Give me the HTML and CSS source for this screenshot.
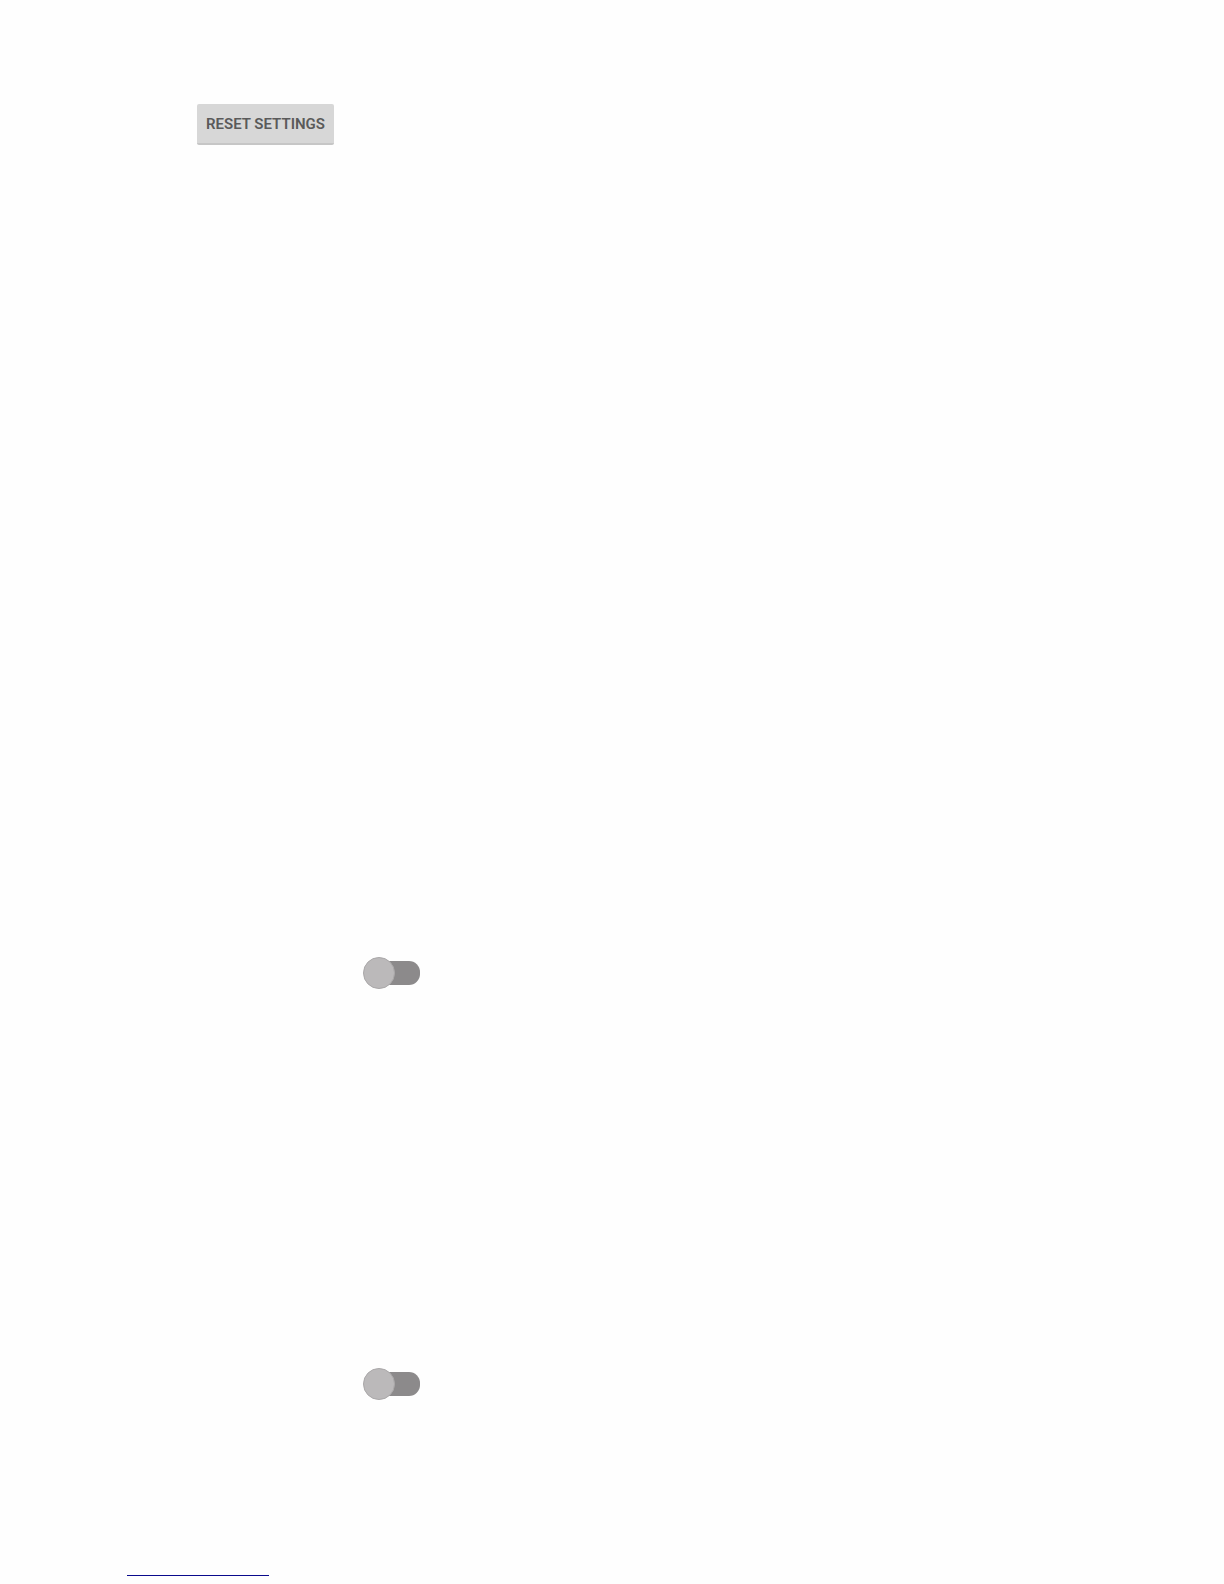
FILE: index.html
```html
<!DOCTYPE html>
<html lang="en">
<head>
<meta charset="utf-8">
<meta name="viewport" content="width=device-width, initial-scale=1">
<title>Settings</title>
<link rel="stylesheet" href="styles.css">
</head>
<body>
<main class="page">
  <section class="reset">
    <button class="reset-button" type="button">RESET SETTINGS</button>
  </section>
  <section class="option">
    <input class="switch" type="checkbox" role="switch" aria-label="First option">
  </section>
  <section class="option">
    <input class="switch" type="checkbox" role="switch" aria-label="Second option">
  </section>
  <hr class="rule">
</main>
</body>
</html>
```
FILE: styles.css
```css
body {
  margin: 0;
  background: #fefefe;
  font-family: Roboto, "Liberation Sans", sans-serif;
}

.page {
  display: flex;
  flex-direction: column;
  padding: 104px 127px 8px;
}

.reset {
  display: flex;
  padding: 0 0 812px 70px;
}

.reset-button {
  height: 41px;
  padding: 0 9px;
  border: 0;
  border-bottom: 2px solid #c6c6c6;
  border-radius: 2px;
  background: #d7d7d7;
  color: #5a5a5a;
  font: 600 15px/20px Roboto, "Liberation Sans", sans-serif;
}

.option {
  display: flex;
  padding-left: 236px;
}

.option + .option {
  padding-top: 379px;
}

.switch {
  appearance: none;
  display: flex;
  align-items: center;
  width: 57px;
  height: 32px;
  margin: 0;
  background: linear-gradient(#8c8a8b, #8c8a8b) center / 25px 24px no-repeat;
}

/* thumb */
.switch::before {
  content: "";
  box-sizing: border-box;
  flex: none;
  width: 32px;
  height: 32px;
  border: 1px solid #aaa8a9;
  border-radius: 50%;
  background: #bbb9ba;
}

/* visible end of the track */
.switch::after {
  content: "";
  flex: 1;
  height: 24px;
  border-radius: 0 11px 11px 0;
  background: #8c8a8b;
}

.switch:checked {
  flex-direction: row-reverse;
}

.rule {
  width: 142px;
  height: 1px;
  margin: 175px 0 0;
  border: 0;
  background: #0a0a8c;
}
```
